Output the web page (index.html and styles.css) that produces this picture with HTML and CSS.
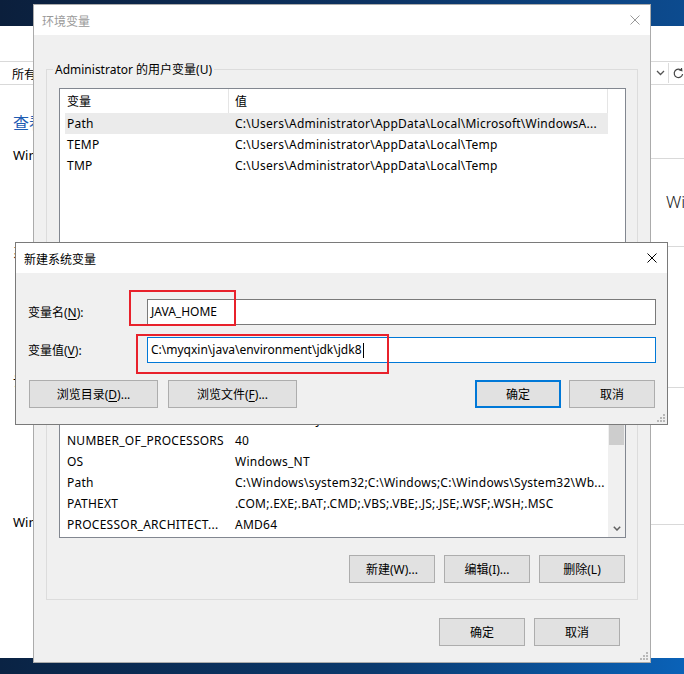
FILE: index.html
```html
<!DOCTYPE html>
<html lang="zh-CN">
<head>
<meta charset="utf-8">
<title>环境变量</title>
<link rel="stylesheet" href="styles.css">
</head>
<body>
<div class="desktop">
  <div class="topbar"></div>
  <div class="bgwin">
    <div class="bg-toolbar">
      <span class="bg-all">所有控制面板项</span>
      <span class="bg-tools">
        <svg class="ico-chev" width="9" height="6" viewBox="0 0 9 6"><path d="M1 1 L4.5 4.5 L8 1" fill="none" stroke="#555" stroke-width="1.3"/></svg>
        <span class="bg-sep"></span>
        <svg class="ico-refresh" width="11" height="11" viewBox="0 0 11 11"><path d="M8.6 2.6 A4.2 4.2 0 1 0 9.6 6" fill="none" stroke="#444" stroke-width="1.2"/><path d="M5.8 1.6 L8.8 2.6 L8.4 -0.2" fill="none" stroke="#444" stroke-width="1.2"/></svg>
      </span>
    </div>
    <div class="bg-content">
      <div class="bg-left">
        <div class="bg-heading">查看有关计算机的基本信息</div>
        <div class="bg-text t-edition">Windows 版本</div>
        <div class="bg-text t-system">系统</div>
        <div class="bg-text t-name">计算机名、域和工作组设置</div>
        <div class="bg-text t-activate">Windows 激活</div>
      </div>
      <div class="bg-right">
        <div class="r-line r-l1"></div>
        <div class="bg-logo">Windows 10</div>
        <div class="r-line r-l2"></div>
        <div class="r-line r-l3"></div>
        <div class="r-line r-l4"></div>
      </div>
    </div>
  </div>
  <div class="taskbar"></div>
</div>

<div class="dlg dlg-env">
  <div class="titlebar inactive">
    <span class="title">环境变量</span>
    <svg class="close" width="10" height="10" viewBox="0 0 10 10"><path d="M0.5 0.5 L9.5 9.5 M9.5 0.5 L0.5 9.5" stroke="#9a9a9a" stroke-width="1"/></svg>
  </div>
  <div class="env-body">
    <fieldset class="group">
      <legend>Administrator 的用户变量(U)</legend>
      <div class="list">
        <div class="list-cols">
          <div class="list-head">
            <div class="h1">变量</div>
            <div class="h2">值</div>
          </div>
          <div class="rows">
            <div class="row sel"><span>Path</span><span>C:\Users\Administrator\AppData\Local\Microsoft\WindowsA...</span></div>
            <div class="row"><span>TEMP</span><span>C:\Users\Administrator\AppData\Local\Temp</span></div>
            <div class="row"><span>TMP</span><span>C:\Users\Administrator\AppData\Local\Temp</span></div>
            <div class="rows-gap"></div>
            <div class="row"><span>DriverData</span><span>C:\Windows\System32\Drivers\DriverData</span></div>
            <div class="row"><span>NUMBER_OF_PROCESSORS</span><span>40</span></div>
            <div class="row"><span>OS</span><span>Windows_NT</span></div>
            <div class="row"><span>Path</span><span>C:\Windows\system32;C:\Windows;C:\Windows\System32\Wb...</span></div>
            <div class="row"><span>PATHEXT</span><span>.COM;.EXE;.BAT;.CMD;.VBS;.VBE;.JS;.JSE;.WSF;.WSH;.MSC</span></div>
            <div class="row"><span>PROCESSOR_ARCHITECT...</span><span>AMD64</span></div>
          </div>
        </div>
        <div class="vscroll">
          <div class="vs-space"></div>
          <div class="vs-track">
            <div class="vs-thumb"></div>
            <div class="vs-fill"></div>
            <div class="vs-arrow"><svg width="8" height="5" viewBox="0 0 8 5"><path d="M0.8 0.8 L4 4 L7.2 0.8" fill="none" stroke="#606060" stroke-width="1.5"/></svg></div>
          </div>
        </div>
      </div>
      <div class="btn-row">
        <button class="btn">新建(W)...</button>
        <button class="btn">编辑(I)...</button>
        <button class="btn">删除(L)</button>
      </div>
    </fieldset>
    <div class="btn-row footer">
      <button class="btn">确定</button>
      <button class="btn">取消</button>
    </div>
  </div>
  <svg class="grip" width="8" height="8" viewBox="0 0 8 8"><g fill="#b8b8b8"><rect x="6" y="0" width="2" height="2"/><rect x="3" y="3" width="2" height="2"/><rect x="6" y="3" width="2" height="2"/><rect x="0" y="6" width="2" height="2"/><rect x="3" y="6" width="2" height="2"/><rect x="6" y="6" width="2" height="2"/></g></svg>
</div>

<div class="dlg dlg-new">
  <div class="titlebar">
    <span class="title">新建系统变量</span>
    <svg class="close" width="10" height="10" viewBox="0 0 10 10"><path d="M0.5 0.5 L9.5 9.5 M9.5 0.5 L0.5 9.5" stroke="#000" stroke-width="1"/></svg>
  </div>
  <div class="new-body">
    <div class="field">
      <label class="field-label">变量名(<u>N</u>):</label>
      <div class="input">JAVA_HOME</div>
    </div>
    <div class="field second">
      <label class="field-label">变量值(<u>V</u>):</label>
      <div class="input focus">C:\myqxin\java\environment\jdk\jdk8<span class="caret"></span></div>
    </div>
    <div class="new-buttons">
      <button class="btn wide">浏览目录(<u>D</u>)...</button>
      <button class="btn wide">浏览文件(<u>F</u>)...</button>
      <span class="spacer"></span>
      <button class="btn default">确定</button>
      <button class="btn">取消</button>
    </div>
  </div>
  <svg class="grip" width="8" height="8" viewBox="0 0 8 8"><g fill="#b8b8b8"><rect x="6" y="0" width="2" height="2"/><rect x="3" y="3" width="2" height="2"/><rect x="6" y="3" width="2" height="2"/><rect x="0" y="6" width="2" height="2"/><rect x="3" y="6" width="2" height="2"/><rect x="6" y="6" width="2" height="2"/></g></svg>
</div>

<div class="mark mark-name"></div>
<div class="mark mark-value"></div>
</body>
</html>
```

FILE: styles.css
```css
* { box-sizing: border-box; }
html, body { margin: 0; padding: 0; }
body {
  width: 684px;
  height: 674px;
  overflow: hidden;
  position: relative;
  background: #fff;
  color: #000;
  font-family: "Noto Sans", "Noto Sans CJK SC", sans-serif;
  font-size: 12px;
}

/* ---------- desktop / background window ---------- */
.desktop { display: flex; flex-direction: column; height: 674px; }
.topbar {
  height: 26px;
  background: linear-gradient(90deg, #0b1f3c 0%, #0d3363 55%, #0c4b8f 100%);
}
.bgwin { flex: 1; display: flex; flex-direction: column; background: #fff; overflow: hidden; }
.bg-toolbar {
  margin-top: 35px;
  height: 24px;
  border-top: 1px solid #d9d9d9;
  border-bottom: 1px solid #d9d9d9;
  display: flex;
  align-items: center;
  justify-content: space-between;
  padding-left: 12px;
}
.bg-all { font-family: "Noto Sans CJK SC", sans-serif; font-size: 12px; white-space: nowrap; }
.bg-tools { display: flex; align-items: center; }
.ico-chev { margin-right: 3px; }
.bg-sep { width: 1px; height: 20px; background: #dcdcdc; margin-right: 4px; }
.bg-content { flex: 1; display: flex; }
.bg-left { flex: 1; padding-left: 13px; overflow: hidden; white-space: nowrap; }
.bg-heading {
  margin-top: 25px;
  font-family: "Noto Sans CJK SC", sans-serif;
  font-size: 16px;
  line-height: 24px;
  color: #1e5cb3;
}
.bg-text { font-size: 13px; line-height: 18px; color: #000; }
.t-edition { margin-top: 12px; }
.t-system { margin-top: 79px; }
.t-name { margin-top: 111px; }
.t-activate { margin-top: 123px; }
.bg-right { width: 40px; overflow: hidden; white-space: nowrap; }
.r-line { border-top: 1px solid #d9d9d9; }
.r-l1 { margin-top: 73px; }
.bg-logo {
  margin-top: 31px;
  padding-left: 22px;
  font-size: 17px;
  line-height: 24px;
  font-weight: 300;
  color: #222;
}
.r-l2 { margin-top: 32px; }
.r-l3 { margin-top: 140px; }
.r-l4 { margin-top: 136px; }
.taskbar {
  height: 16px;
  background: linear-gradient(90deg, #0a2344 0%, #0b3a6e 55%, #0a62b8 100%);
}

/* ---------- dialogs ---------- */
.dlg {
  position: absolute;
  background: #f0f0f0;
  display: flex;
  flex-direction: column;
}
.titlebar {
  height: 30px;
  background: #fff;
  display: flex;
  align-items: center;
  justify-content: space-between;
  padding: 0 10px 0 8px;
  font-family: "Noto Sans CJK SC", sans-serif;
  font-size: 12px;
}
.titlebar.inactive .title { color: #9a9a9a; }
.grip { position: absolute; right: 2px; bottom: 2px; }

button { font: inherit; color: inherit; }
.btn {
  width: 86px;
  height: 28px;
  background: #e1e1e1;
  border: 1px solid #adadad;
  padding: 0;
  font-family: "Noto Sans", "Noto Sans CJK SC", sans-serif;
  font-size: 12px;
  display: flex;
  align-items: center;
  justify-content: center;
}
.btn u { text-underline-offset: 2px; }

/* environment variables dialog */
.dlg-env {
  left: 33px;
  top: 4px;
  width: 618px;
  border: 1px solid #ababab;
}
.env-body { padding: 26px 12px 16px 12px; }
.group {
  margin: 0;
  min-width: 0;
  border: 1px solid #dcdcdc;
  padding: 10px 11px 16px 12px;
}
.group legend {
  margin-left: -6px;
  padding: 0 2px;
  line-height: 17px;
  font-size: 12px;
}
.list {
  height: 450px;
  border: 1px solid #828790;
  background: #fff;
  display: flex;
}
.list-cols { flex: 1; display: flex; flex-direction: column; min-width: 0; }
.list-head { height: 24px; display: flex; align-items: center; }
.list-head .h1 {
  width: 169px;
  height: 24px;
  line-height: 23px;
  padding: 1px 0 0 7px;
  border-right: 1px solid #e5e5e5;
}
.list-head .h2 {
  flex: 1;
  height: 24px;
  line-height: 23px;
  padding: 1px 0 0 6px;
  border-right: 1px solid #e5e5e5;
}
.rows { padding-left: 5px; }
.row {
  height: 21px;
  line-height: 20px;
  padding-top: 1px;
  display: grid;
  grid-template-columns: 168px 1fr;
  padding-left: 2px;
  white-space: nowrap;
  overflow: hidden;
  letter-spacing: 0.25px;
}
.row.sel { background: #ebebeb; }
.rows-gap { height: 233px; }
.vscroll { width: 17px; display: flex; flex-direction: column; }
.vs-space { flex: 1; }
.vs-track {
  height: 136px;
  background: #f0f0f0;
  display: flex;
  flex-direction: column;
}
.vs-thumb { height: 44px; margin: 0 1px; background: #cdcdcd; }
.vs-fill { flex: 1; }
.vs-arrow { height: 17px; display: flex; align-items: center; justify-content: center; }
.btn-row {
  display: flex;
  justify-content: flex-end;
  gap: 9px;
  margin-top: 17px;
  padding-right: 1px;
}
.btn-row.footer { margin-top: 18px; padding-right: 18px; }

/* new system variable dialog */
.dlg-new {
  left: 15px;
  top: 242px;
  width: 653px;
  border: 1px solid #7a7a7a;
}
.new-body { padding: 26px 11px 16px 12px; }
.field { display: flex; align-items: center; }
.field.second { margin-top: 12px; }
.field-label { width: 119px; white-space: nowrap; }
.field-label u { text-underline-offset: 2px; }
.input {
  flex: 1;
  height: 26px;
  line-height: 24px;
  background: #fff;
  border: 1px solid #7a7a7a;
  padding-left: 3px;
  white-space: nowrap;
  display: flex;
  align-items: center;
}
.input.focus { border-color: #0078d7; }
.caret {
  display: inline-block;
  width: 1px;
  height: 15px;
  background: #000;
  margin-left: 1px;
}
.new-buttons {
  display: flex;
  align-items: center;
  margin-top: 17px;
  padding-left: 1px;
  padding-right: 1px;
}
.btn.wide { width: 129px; }
.btn.wide + .btn.wide { margin-left: 10px; }
.spacer { flex: 1; }
.btn.default { border: 2px solid #0078d7; margin-right: 8px; }

/* red annotation boxes */
.mark { position: absolute; border: 2px solid #e8212b; }
.mark-name { left: 129px; top: 290px; width: 107px; height: 36px; }
.mark-value { left: 136px; top: 334px; width: 253px; height: 40px; }
```
